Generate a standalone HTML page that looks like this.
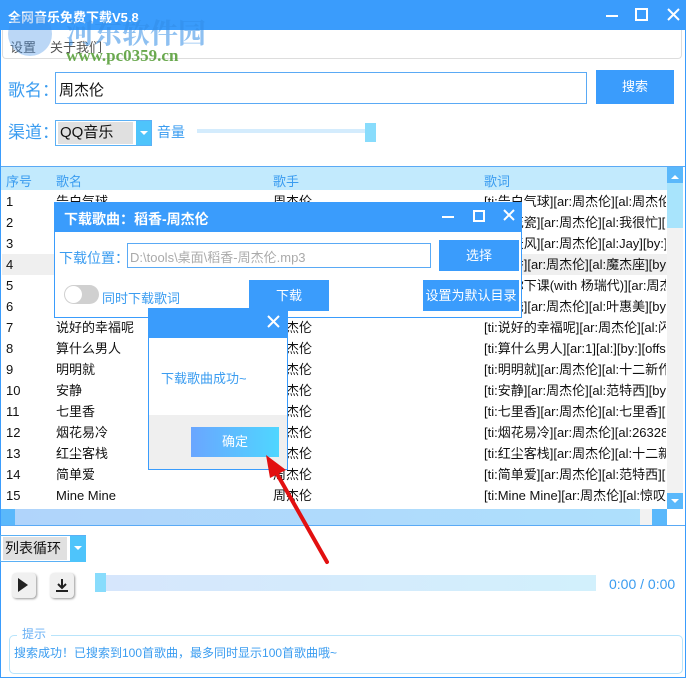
<!DOCTYPE html>
<html><head><meta charset="utf-8"><style>
*{margin:0;padding:0;box-sizing:border-box}
body{width:686px;height:678px;position:relative;overflow:hidden;background:#fff;font-family:"Liberation Sans","Noto Sans CJK SC",sans-serif;font-size:13px;color:#111}
.a{position:absolute}
.blue{color:#3a9cf0}
.btn{position:absolute;background:#3a9cfc;color:#fff;text-align:center;font-size:13px}
.row{position:absolute;left:2px;width:665px;height:21px;line-height:21px}
.row span{position:absolute;white-space:nowrap}
.row span:last-child{width:182px;overflow:hidden}
</style></head><body>
<div class="a" style="left:0;top:0;width:686px;height:678px;border:1px solid #3a9cfc"></div>
<div class="a" style="left:0;top:0;width:686px;height:30px;background:#3a9cfc"></div>
<div class="a" style="left:8px;top:7px;color:#fff;font-size:13px;font-weight:bold">全网音乐免费下载V5.8</div>
<svg class="a" style="left:600px;top:6px" width="80" height="20"><g stroke="#fff" stroke-width="2" fill="none"><path d="M6 10h12"/><rect x="36" y="3" width="11" height="11"/><path d="M68 3l11 11M79 3l-11 11"/></g></svg>
<div class="a" style="left:2px;top:30px;width:680px;height:29px;border:1px solid #ddd;border-top:none;border-radius:0 0 4px 4px"></div>
<div class="a" style="left:10px;top:37px;color:#555">设置</div>
<div class="a" style="left:50px;top:37px;color:#555">关于我们</div>
<div class="a" style="left:8px;top:12px;width:44px;height:44px;border-radius:50%;background:rgba(60,140,230,.35)"></div>
<div class="a" style="left:66px;top:12px;font-size:28px;font-weight:bold;color:rgba(50,140,230,.55);font-family:'Noto Serif CJK SC',serif">河东软件园</div>
<div class="a" style="left:66px;top:46px;font-size:17px;font-weight:bold;color:rgba(90,160,60,.9);font-family:'Liberation Serif',serif">www.pc0359.cn</div>

<div class="a blue" style="left:8px;top:76px;font-size:17px">歌名：</div>
<div class="a" style="left:55px;top:72px;width:532px;height:32px;border:1px solid #5aaaf5;padding:6px 3px;font-size:15px">周杰伦</div>
<div class="btn" style="left:596px;top:70px;width:78px;height:34px;line-height:34px">搜索</div>
<div class="a blue" style="left:8px;top:118px;font-size:17px">渠道：</div>
<div class="a" style="left:55px;top:120px;width:97px;height:26px;border:1px solid #5ab0f5"></div>
<div class="a" style="left:58px;top:122px;width:75px;height:22px;background:#e0e0e0;font-size:15px;line-height:22px;padding-left:2px">QQ音乐</div>
<div class="a" style="left:136px;top:121px;width:15px;height:24px;background:#4ec4fb"></div>
<div class="a" style="left:140px;top:131px;border:4px solid transparent;border-top:4px solid #fff"></div>
<div class="a blue" style="left:157px;top:122px;font-size:14px">音量</div>
<div class="a" style="left:197px;top:129px;width:170px;height:4px;background:#d4ecfd"></div>
<div class="a" style="left:365px;top:123px;width:11px;height:19px;background:#88dcfc"></div>

<div class="a" style="left:1px;top:166px;width:684px;height:1px;background:#5aaaf5"></div>
<div class="a" style="left:1px;top:167px;width:666px;height:23px;background:#c2eafd"></div>
<div class="a blue" style="left:6px;top:171px">序号</div>
<div class="a blue" style="left:56px;top:171px">歌名</div>
<div class="a blue" style="left:273px;top:171px">歌手</div>
<div class="a blue" style="left:484px;top:171px">歌词</div>
<div class="a" style="left:2px;top:254px;width:665px;height:21px;background:#efefef"></div>
<div class="a" style="left:0;top:1px">
<div class="row" style="top:190px"><span style="left:4px">1</span><span style="left:54px">告白气球</span><span style="left:271px">周杰伦</span><span style="left:482px">[ti:告白气球][ar:周杰伦][al:周杰伦...</span></div>
<div class="row" style="top:211px"><span style="left:4px">2</span><span style="left:482px">[ti:青花瓷][ar:周杰伦][al:我很忙][...</span></div>
<div class="row" style="top:232px"><span style="left:4px">3</span><span style="left:482px">[ti:晴天风][ar:周杰伦][al:Jay][by:]...</span></div>
<div class="row" style="top:253px"><span style="left:4px">4</span><span style="left:482px">[ti:稻香][ar:周杰伦][al:魔杰座][by:...</span></div>
<div class="row" style="top:274px"><span style="left:4px">5</span><span style="left:482px">[ti:等你下课(with 杨瑞代)][ar:周杰...</span></div>
<div class="row" style="top:295px"><span style="left:4px">6</span><span style="left:482px">[ti:搁浅][ar:周杰伦][al:叶惠美][by:...</span></div>
<div class="row" style="top:316px"><span style="left:4px">7</span><span style="left:54px">说好的幸福呢</span><span style="left:271px">周杰伦</span><span style="left:482px">[ti:说好的幸福呢][ar:周杰伦][al:闪...</span></div>
<div class="row" style="top:337px"><span style="left:4px">8</span><span style="left:54px">算什么男人</span><span style="left:271px">周杰伦</span><span style="left:482px">[ti:算什么男人][ar:1][al:][by:][offs...</span></div>
<div class="row" style="top:358px"><span style="left:4px">9</span><span style="left:54px">明明就</span><span style="left:271px">周杰伦</span><span style="left:482px">[ti:明明就][ar:周杰伦][al:十二新作...</span></div>
<div class="row" style="top:379px"><span style="left:4px">10</span><span style="left:54px">安静</span><span style="left:271px">周杰伦</span><span style="left:482px">[ti:安静][ar:周杰伦][al:范特西][by:...</span></div>
<div class="row" style="top:400px"><span style="left:4px">11</span><span style="left:54px">七里香</span><span style="left:271px">周杰伦</span><span style="left:482px">[ti:七里香][ar:周杰伦][al:七里香][...</span></div>
<div class="row" style="top:421px"><span style="left:4px">12</span><span style="left:54px">烟花易冷</span><span style="left:271px">周杰伦</span><span style="left:482px">[ti:烟花易冷][ar:周杰伦][al:26328...</span></div>
<div class="row" style="top:442px"><span style="left:4px">13</span><span style="left:54px">红尘客栈</span><span style="left:271px">周杰伦</span><span style="left:482px">[ti:红尘客栈][ar:周杰伦][al:十二新...</span></div>
<div class="row" style="top:463px"><span style="left:4px">14</span><span style="left:54px">简单爱</span><span style="left:271px">周杰伦</span><span style="left:482px">[ti:简单爱][ar:周杰伦][al:范特西][...</span></div>
<div class="row" style="top:484px"><span style="left:4px">15</span><span style="left:54px">Mine Mine</span><span style="left:271px">周杰伦</span><span style="left:482px">[ti:Mine Mine][ar:周杰伦][al:惊叹...</span></div>
</div>
<div class="a" style="left:667px;top:167px;width:16px;height:342px;background:#f2f2f2"></div>
<div class="a" style="left:667px;top:167px;width:16px;height:16px;background:#5ab8fb"></div>
<div class="a" style="left:671px;top:171px;border:4px solid transparent;border-bottom:4px solid #fff"></div>
<div class="a" style="left:667px;top:183px;width:16px;height:45px;background:#a8e4fc"></div>
<div class="a" style="left:667px;top:493px;width:16px;height:16px;background:#5ab8fb"></div>
<div class="a" style="left:671px;top:499px;border:4px solid transparent;border-top:4px solid #fff"></div>
<div class="a" style="left:1px;top:509px;width:666px;height:16px;background:linear-gradient(90deg,#b0d4fb,#aee0fc)"></div>
<div class="a" style="left:1px;top:509px;width:14px;height:16px;background:#5ab8fb"></div>
<div class="a" style="left:640px;top:509px;width:12px;height:16px;background:#f2f2f2"></div>
<div class="a" style="left:652px;top:509px;width:15px;height:16px;background:#5ab8fb"></div>
<div class="a" style="left:1px;top:525px;width:684px;height:1px;background:#5aaaf5"></div>

<div class="a" style="left:54px;top:202px;width:468px;height:116px;background:#fff;border:1px solid #3a9cfc"></div>
<div class="a" style="left:54px;top:202px;width:468px;height:30px;background:#3a9cfc"></div>
<div class="a" style="left:64px;top:209px;color:#fff;font-size:14px;font-weight:bold">下载歌曲：稻香-周杰伦</div>
<svg class="a" style="left:440px;top:207px" width="80" height="20"><g stroke="#fff" stroke-width="2" fill="none"><path d="M2 10h12"/><rect x="34" y="4" width="10" height="10"/><path d="M64 3l10 10M74 3l-10 10"/></g></svg>
<div class="a blue" style="left:59px;top:248px;font-size:14px">下载位置：</div>
<div class="a" style="left:127px;top:243px;width:304px;height:25px;border:1px solid #5aaaf5;color:#aaa;padding:3px 2px">D:\tools\桌面\稻香-周杰伦.mp3</div>
<div class="btn" style="left:439px;top:240px;width:80px;height:31px;line-height:31px">选择</div>
<div class="a" style="left:64px;top:285px;width:35px;height:19px;border-radius:10px;background:#d0d0d0"></div>
<div class="a" style="left:65px;top:286px;width:17px;height:17px;border-radius:50%;background:#fff"></div>
<div class="a blue" style="left:102px;top:288px">同时下载歌词</div>
<div class="btn" style="left:249px;top:280px;width:80px;height:31px;line-height:31px">下载</div>
<div class="btn" style="left:423px;top:280px;width:96px;height:31px;line-height:31px">设置为默认目录</div>

<div class="a" style="left:148px;top:308px;width:140px;height:162px;background:#fff;border:1px solid #3a9cfc"></div>
<div class="a" style="left:148px;top:308px;width:140px;height:30px;background:#3a9cfc"></div>
<svg class="a" style="left:267px;top:315px" width="14" height="14"><path d="M1 1l11 11M12 1l-11 11" stroke="#fff" stroke-width="2"/></svg>
<div class="a blue" style="left:161px;top:368px">下载歌曲成功~</div>
<div class="a" style="left:149px;top:415px;width:138px;height:54px;background:#efefef"></div>
<div class="a" style="left:191px;top:427px;width:88px;height:30px;line-height:30px;text-align:center;color:#fff;background:linear-gradient(90deg,#6aa6ff,#4fd6ff)">确定</div>

<svg class="a" style="left:250px;top:440px" width="100" height="140"><path d="M77 122L22 25" stroke="#e21010" stroke-width="4" stroke-linecap="round"/><path d="M16 15L36 30L20 38Z" fill="#e21010"/></svg>

<div class="a" style="left:0;top:535px;width:86px;height:27px;border:1px solid #5ab0f5"></div>
<div class="a" style="left:3px;top:537px;width:64px;height:23px;background:#e0e0e0;font-size:14px;line-height:23px;padding-left:2px">列表循环</div>
<div class="a" style="left:70px;top:536px;width:16px;height:26px;background:#4ec4fb"></div>
<div class="a" style="left:74px;top:546px;border:4px solid transparent;border-top:4px solid #fff"></div>
<div class="a" style="left:12px;top:573px;width:24px;height:25px;background:#f0f0f0;border-radius:4px;box-shadow:1px 1px 2px #999"></div>
<div class="a" style="left:18px;top:578px;border:7px solid transparent;border-left:10px solid #222;border-right:none"></div>
<div class="a" style="left:50px;top:573px;width:24px;height:25px;background:#f0f0f0;border-radius:4px;box-shadow:1px 1px 2px #999"></div>
<svg class="a" style="left:54px;top:578px" width="16" height="16"><path d="M8 1v8M4 6l4 4 4-4M2 13h12" stroke="#222" stroke-width="2" fill="none"/></svg>
<div class="a" style="left:95px;top:575px;width:501px;height:16px;background:linear-gradient(90deg,#d6e6fc,#d2f0fc)"></div>
<div class="a" style="left:95px;top:573px;width:11px;height:19px;background:#88dcfc"></div>
<div class="a blue" style="left:609px;top:576px;font-size:14px">0:00 / 0:00</div>
<div class="a" style="left:9px;top:635px;width:674px;height:39px;border:1px solid #b8e4fb;border-radius:5px"></div>
<div class="a" style="left:17px;top:625px;background:#fff;padding:0 5px;color:#6ab0f5;font-size:12px">提示</div>
<div class="a blue" style="left:14px;top:644px;font-size:12px">搜索成功！已搜索到100首歌曲，最多同时显示100首歌曲哦~</div>
</body></html>
